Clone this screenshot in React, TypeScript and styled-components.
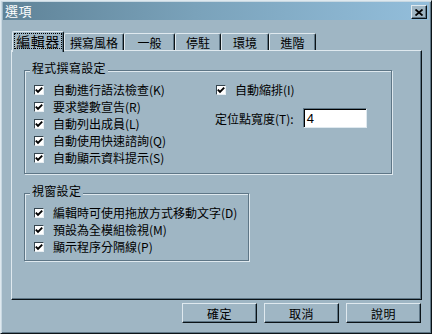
import React from "react";
import styled, { createGlobalStyle } from "styled-components";

const BG = "#9fb6c4";
const LIGHT = "#dfe9ef";
const SHADOW = "#5e7686";
const DARK = "#0b1317";

const Global = createGlobalStyle`
  html, body { margin: 0; padding: 0; background: ${BG}; }
  body {
    font-family: "Noto Sans CJK TC", "Noto Sans CJK SC", sans-serif;
    font-size: 12px;
    color: #000;
  }
`;

const Window = styled.div`
  width: 432px;
  height: 334px;
  box-sizing: border-box;
  background: ${BG};
  border-top: 1px solid ${LIGHT};
  border-left: 1px solid ${LIGHT};
  border-right: 1px solid ${DARK};
  border-bottom: 1px solid ${DARK};
  box-shadow: inset 1px 1px 0 #c8d8e2, inset -1px -1px 0 ${SHADOW};
  padding: 1px 2px 2px 2px;
  display: flex;
  flex-direction: column;
`;

const TitleBar = styled.div`
  height: 18px;
  flex: none;
  display: flex;
  align-items: center;
  justify-content: space-between;
  padding: 0 2px 0 2px;
  background: linear-gradient(to right, #5f8398 0%, #7aa2ba 45%, #93bedb 100%);
`;

const Title = styled.span`
  color: #ffffff;
  font-size: 13px;
  line-height: 18px;
  letter-spacing: 0.5px;
`;

const CloseButton = styled.div`
  width: 16px;
  height: 14px;
  box-sizing: border-box;
  margin-top: 2px;
  background: ${BG};
  border-top: 1px solid ${LIGHT};
  border-left: 1px solid ${LIGHT};
  border-right: 1px solid ${DARK};
  border-bottom: 1px solid ${DARK};
  box-shadow: inset -1px -1px 0 ${SHADOW};
  display: flex;
  align-items: center;
  justify-content: center;
`;

const Body = styled.div`
  flex: 1;
  display: flex;
  flex-direction: column;
  padding: 11px 7px 0 8px;
`;

const TabStrip = styled.div`
  height: 19px;
  display: flex;
  align-items: flex-end;
  position: relative;
  z-index: 1;
  padding-left: 1px;
`;

const Tab = styled.div<{ $w: number; $active?: boolean }>`
  width: ${(p) => p.$w}px;
  height: ${(p) => (p.$active ? 21 : 17)}px;
  margin-bottom: ${(p) => (p.$active ? -2 : 0)}px;
  box-sizing: border-box;
  background: ${BG};
  border-top: 1px solid ${LIGHT};
  border-left: 1px solid ${LIGHT};
  border-right: 1px solid ${DARK};
  border-radius: 2px 2px 0 0;
  box-shadow: inset -1px 0 0 ${SHADOW};
  display: flex;
  align-items: flex-start;
  justify-content: center;
  padding: ${(p) => (p.$active ? "1px 1px 2px 1px" : "1px 0 0 0")};
  font-size: ${(p) => (p.$active ? 14 : 12)}px;
  line-height: 15px;
`;

const FocusLabel = styled.span`
  flex: 1;
  align-self: stretch;
  margin-bottom: 1px;
  border: 1px dotted #000;
  display: flex;
  align-items: center;
  justify-content: center;
  letter-spacing: 0.5px;
`;

const Panel = styled.div`
  width: 411px;
  height: 250px;
  box-sizing: border-box;
  border-top: 1px solid ${LIGHT};
  border-left: 1px solid ${LIGHT};
  border-right: 1px solid ${DARK};
  border-bottom: 1px solid ${DARK};
  box-shadow: inset -1px -1px 0 ${SHADOW};
  display: flex;
  flex-direction: column;
  padding: 0 0 0 12px;
`;

const GroupBox = styled.div<{ $w: number; $h: number }>`
  position: relative;
  width: ${(p) => p.$w}px;
  height: ${(p) => p.$h}px;
  box-sizing: border-box;
  margin-top: 19px;
  border: 1px solid ${SHADOW};
  box-shadow: 1px 1px 0 ${LIGHT}, inset 1px 1px 0 ${LIGHT};
  padding: 10px 0 0 9px;
  display: flex;
`;

const GroupTitle = styled.span`
  position: absolute;
  top: -10px;
  left: 5px;
  padding: 0 2px;
  line-height: 14px;
  background: ${BG};
  letter-spacing: 0.3px;
`;

const Column = styled.div<{ $w?: number }>`
  display: flex;
  flex-direction: column;
  width: ${(p) => (p.$w ? `${p.$w}px` : "auto")};
`;

const Row = styled.label`
  height: 17px;
  display: flex;
  align-items: center;
  gap: 9px;
  white-space: nowrap;
`;

const Box = styled.span`
  width: 10px;
  height: 10px;
  box-sizing: border-box;
  background: #fff;
  border-top: 1px solid #34444e;
  border-left: 1px solid #34444e;
  border-right: 1px solid #e8eff3;
  border-bottom: 1px solid #e8eff3;
  display: flex;
  align-items: center;
  justify-content: center;
  flex: none;
`;

const FieldRow = styled.div`
  margin-top: 10px;
  display: flex;
  align-items: center;
  gap: 9px;
  margin-left: -1px;
`;

const TextBox = styled.div`
  width: 64px;
  height: 20px;
  box-sizing: border-box;
  background: #fff;
  border-top: 1px solid ${SHADOW};
  border-left: 1px solid ${SHADOW};
  border-right: 1px solid ${LIGHT};
  border-bottom: 1px solid ${LIGHT};
  box-shadow: inset 1px 1px 0 #000;
  padding: 1px 0 0 3px;
  font-family: "Liberation Sans", Arial, sans-serif;
  font-size: 13px;
  line-height: 17px;
`;

const ButtonRow = styled.div`
  margin-top: 3px;
  display: flex;
  justify-content: flex-end;
  gap: 7px;
  padding-right: 1px;
`;

const Button = styled.div`
  width: 75px;
  height: 20px;
  box-sizing: border-box;
  background: ${BG};
  border-top: 1px solid ${LIGHT};
  border-left: 1px solid ${LIGHT};
  border-right: 1px solid ${DARK};
  border-bottom: 1px solid ${DARK};
  box-shadow: inset -1px -1px 0 ${SHADOW};
  display: flex;
  align-items: center;
  justify-content: center;
  letter-spacing: 0.5px;
`;

const Check = () => (
  <svg width="8" height="8" viewBox="0 0 8 8">
    <polyline points="0.8,3.6 3,5.9 7.2,1.6" fill="none" stroke="#000" strokeWidth="1.9" />
  </svg>
);

const CheckRow = ({ children }: { children: React.ReactNode }) => (
  <Row>
    <Box>
      <Check />
    </Box>
    <span>{children}</span>
  </Row>
);

const tabs: { label: string; w: number }[] = [
  { label: "編輯器", w: 52 },
  { label: "撰寫風格", w: 60 },
  { label: "一般", w: 51 },
  { label: "停駐", w: 46 },
  { label: "環境", w: 48 },
  { label: "進階", w: 47 },
];

export default function App() {
  return (
    <>
      <Global />
      <Window>
        <TitleBar>
          <Title>選項</Title>
          <CloseButton>
            <svg width="8" height="7" viewBox="0 0 8 7">
              <path d="M0.5 0.5 L7.5 6.5 M7.5 0.5 L0.5 6.5" stroke="#000" strokeWidth="1.8" />
            </svg>
          </CloseButton>
        </TitleBar>
        <Body>
          <TabStrip>
            {tabs.map((t, i) =>
              i === 0 ? (
                <Tab key={t.label} $w={t.w} $active>
                  <FocusLabel>{t.label}</FocusLabel>
                </Tab>
              ) : (
                <Tab key={t.label} $w={t.w}>
                  {t.label}
                </Tab>
              )
            )}
          </TabStrip>
          <Panel>
            <GroupBox $w={368} $h={104}>
              <GroupTitle>程式撰寫設定</GroupTitle>
              <Column $w={182}>
                <CheckRow>自動進行語法檢查(K)</CheckRow>
                <CheckRow>要求變數宣告(R)</CheckRow>
                <CheckRow>自動列出成員(L)</CheckRow>
                <CheckRow>自動使用快速諮詢(Q)</CheckRow>
                <CheckRow>自動顯示資料提示(S)</CheckRow>
              </Column>
              <Column>
                <CheckRow>自動縮排(I)</CheckRow>
                <FieldRow>
                  <span>定位點寬度(T):</span>
                  <TextBox>4</TextBox>
                </FieldRow>
              </Column>
            </GroupBox>
            <GroupBox $w={225} $h={68}>
              <GroupTitle>視窗設定</GroupTitle>
              <Column>
                <CheckRow>編輯時可使用拖放方式移動文字(D)</CheckRow>
                <CheckRow>預設為全模組檢視(M)</CheckRow>
                <CheckRow>顯示程序分隔線(P)</CheckRow>
              </Column>
            </GroupBox>
          </Panel>
          <ButtonRow>
            <Button>確定</Button>
            <Button>取消</Button>
            <Button>說明</Button>
          </ButtonRow>
        </Body>
      </Window>
    </>
  );
}
